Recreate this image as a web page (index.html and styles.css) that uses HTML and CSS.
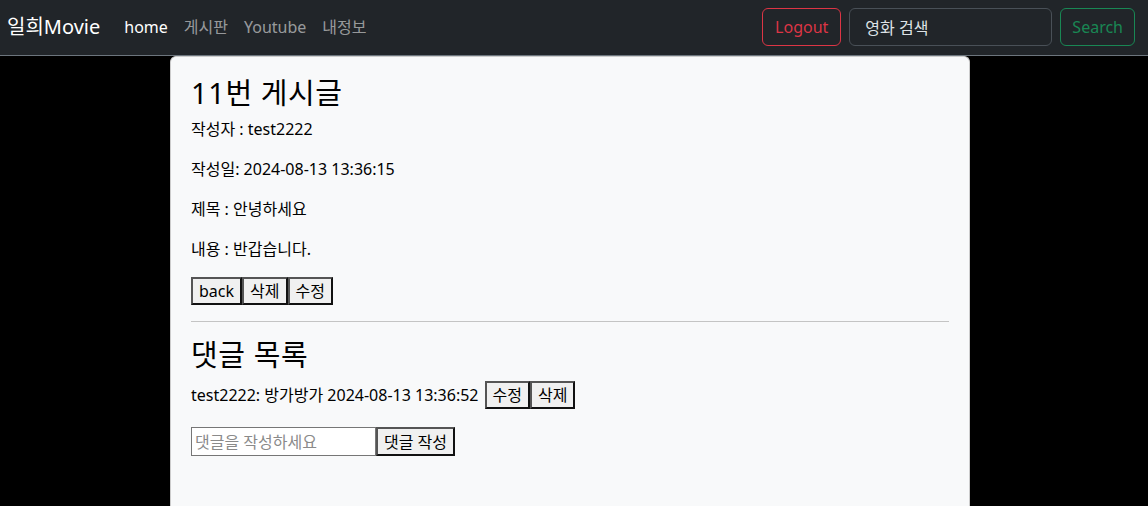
FILE: index.html
```html
<!DOCTYPE html>
<html lang="ko">
<head>
<meta charset="utf-8">
<title>일희Movie</title>
<link rel="stylesheet" href="styles.css">
</head>
<body>
<nav class="navbar">
  <a class="brand" href="#">일희Movie</a>
  <ul class="nav-links">
    <li><a class="nav-link active" href="#">home</a></li>
    <li><a class="nav-link" href="#">게시판</a></li>
    <li><a class="nav-link" href="#">Youtube</a></li>
    <li><a class="nav-link" href="#">내정보</a></li>
  </ul>
  <div class="nav-right">
    <button class="btn btn-danger">Logout</button>
    <input class="search-input" type="text" value="영화 검색">
    <button class="btn btn-success">Search</button>
  </div>
</nav>
<main class="card">
  <h3 class="title">11번 게시글</h3>
  <p>작성자 : test2222</p>
  <p>작성일: 2024-08-13 13:36:15</p>
  <p>제목 : 안녕하세요</p>
  <p>내용 : 반갑습니다.</p>
  <div class="actions"><button class="plain">back</button><button class="plain">삭제</button><button class="plain">수정</button></div>
  <hr class="divider">
  <h3 class="title">댓글 목록</h3>
  <div class="comment"><span>test2222: 방가방가 2024-08-13 13:36:52</span><span class="actions"><button class="plain">수정</button><button class="plain">삭제</button></span></div>
  <form class="comment-form"><input class="comment-input" type="text" placeholder="댓글을 작성하세요"><button class="plain" type="button">댓글 작성</button></form>
</main>
</body>
</html>
```
FILE: styles.css
```css
* { box-sizing: border-box; }
html, body { margin: 0; padding: 0; }
body {
  background: #000;
  font-family: "Noto Sans", "Noto Sans CJK KR", sans-serif;
  font-size: 16px;
  line-height: 1.5;
  color: #212529;
  overflow: hidden;
}
.navbar {
  display: flex;
  align-items: flex-start;
  height: 56px;
  padding: 8px 13px 8px 7px;
  background: #212529;
  border-bottom: 1px solid #6c757d;
}
.brand {
  color: #fff;
  text-decoration: none;
  font-size: 20px;
  line-height: 38px;
  margin-right: 16px;
}
.nav-links {
  display: flex;
  list-style: none;
  margin: 0;
  padding: 0;
}
.nav-link {
  display: block;
  padding: 7px 8px;
  color: rgba(255,255,255,.55);
  text-decoration: none;
}
.nav-link.active { color: #fff; }
.nav-right {
  margin-left: auto;
  display: flex;
  align-items: center;
  gap: 8px;
}
.btn {
  font: inherit;
  height: 38px;
  line-height: 24px;
  padding: 6px 12px;
  border-radius: 6px;
  background: transparent;
  border: 1px solid;
}
.btn-danger { color: #dc3545; border-color: #dc3545; }
.btn-success { color: #198754; border-color: #198754; padding: 6px 11px; }
.search-input {
  font: inherit;
  width: 203px;
  height: 38px;
  padding: 6px 15px;
  color: #dee2e6;
  background: #212529;
  border: 1px solid #495057;
  border-radius: 6px;
}
.card {
  width: 800px;
  min-height: 460px;
  margin-left: 170px;
  padding: 19px 20px 20px;
  background: #f8f9fa;
  border: 1px solid #ccc;
  border-bottom: 0;
  border-radius: 6px 6px 0 0;
}
.title {
  margin: 0 0 7px;
  font-size: 29px;
  letter-spacing: 0.6px;
  font-weight: 400;
  line-height: 33.6px;
  color: #000;
}
.card p { margin: 0 0 16px; color: #000; }
.actions { display: flex; }
.plain {
  font: inherit;
  height: 28px;
  line-height: 24px;
  padding: 0 6px;
  color: #000;
  background: #f0f0f0;
  border: 2px solid;
  border-color: #555 #111 #111 #555;
  border-radius: 0;
}
.divider {
  margin: 16px 0;
  border: 0;
  border-top: 1px solid #c4c4c4;
}
.comment {
  display: flex;
  align-items: center;
  gap: 6px;
  padding-top: 3px;
  color: #000;
  margin-bottom: 18px;
}
.comment-form { display: flex; margin: 0; }
.comment-form .plain { height: 29px; }
.comment-input {
  font: inherit;
  width: 185px;
  height: 29px;
  padding: 1px 3px;
  border: 1px solid #767676;
  background: #fff;
}
.comment-input::placeholder { color: #8a8a8a; }
```
